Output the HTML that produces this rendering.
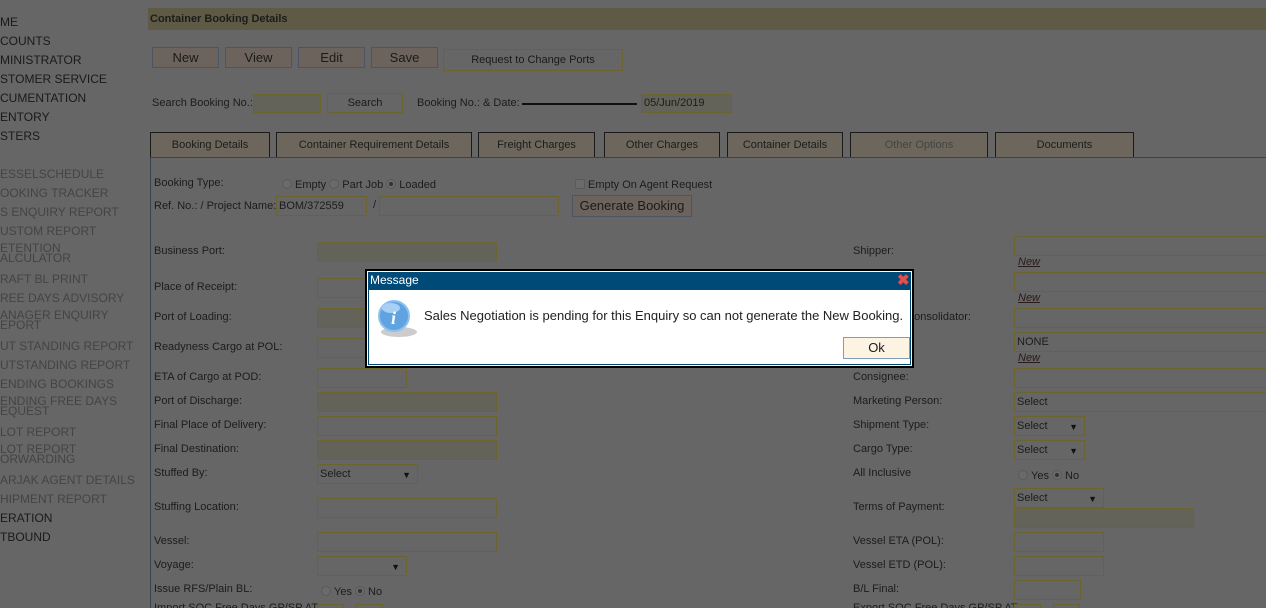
<!DOCTYPE html>
<html><head><meta charset="utf-8"><style>
*{box-sizing:border-box;margin:0;padding:0}
html{width:1266px;height:608px;overflow:hidden}
body{width:1266px;height:608px;overflow:hidden;background:#666;font-family:"Liberation Sans",sans-serif;font-size:11px;color:#1c1c1c;position:relative}
.a{position:absolute;white-space:nowrap}
.nav{font-size:12px;color:#1a1a1a}
.nav.g{color:#444}
.btn{position:absolute;border:1px solid #4c5566;background:#6c645c;text-align:center;font-size:13px;color:#1a1a1a}
.tab{position:absolute;top:132px;height:26px;border:1px solid #1a1a1a;border-bottom:none;background:#6d665c;text-align:center;line-height:25px;font-size:11px}
.in{position:absolute;border:1px solid #6b6430;background:#666;height:20px;font-size:11px;line-height:18px;padding-left:2px}
.dis{background:#64635a}
.lb{position:absolute;font-size:11px;white-space:nowrap}
.sel::after{content:"▼";position:absolute;right:6px;top:1px;font-size:9px;color:#111}
.rad{display:inline-block;width:10px;height:10px;border:1px solid #5a5a5a;border-radius:50%;background:#6a6a6a;vertical-align:-1px;margin-right:3px;position:relative}
.rad.on::after{content:"";position:absolute;left:2px;top:2px;width:4px;height:4px;border-radius:50%;background:#333}
.new{position:absolute;font-style:italic;text-decoration:underline;color:#2a1a1a;font-size:11px}
</style></head><body>
<div class="a nav" style="left:0;top:15px">ME</div>
<div class="a nav" style="left:0;top:34px">COUNTS</div>
<div class="a nav" style="left:0;top:53px">MINISTRATOR</div>
<div class="a nav" style="left:0;top:72px">STOMER SERVICE</div>
<div class="a nav" style="left:0;top:91px">CUMENTATION</div>
<div class="a nav" style="left:0;top:110px">ENTORY</div>
<div class="a nav" style="left:0;top:129px">STERS</div>
<div class="a nav g" style="left:0;top:167px">ESSELSCHEDULE</div>
<div class="a nav g" style="left:0;top:186px">OOKING TRACKER</div>
<div class="a nav g" style="left:0;top:205px">S ENQUIRY REPORT</div>
<div class="a nav g" style="left:0;top:224px">USTOM REPORT</div>
<div class="a nav g" style="left:0;top:243px;line-height:10px">ETENTION<br>ALCULATOR</div>
<div class="a nav g" style="left:0;top:272px">RAFT BL PRINT</div>
<div class="a nav g" style="left:0;top:291px">REE DAYS ADVISORY</div>
<div class="a nav g" style="left:0;top:310px;line-height:10px">ANAGER ENQUIRY<br>EPORT</div>
<div class="a nav g" style="left:0;top:339px">UT STANDING REPORT</div>
<div class="a nav g" style="left:0;top:358px">UTSTANDING REPORT</div>
<div class="a nav g" style="left:0;top:377px">ENDING BOOKINGS</div>
<div class="a nav g" style="left:0;top:396px;line-height:10px">ENDING FREE DAYS<br>EQUEST</div>
<div class="a nav g" style="left:0;top:425px">LOT REPORT</div>
<div class="a nav g" style="left:0;top:444px;line-height:10px">LOT REPORT<br>ORWARDING</div>
<div class="a nav g" style="left:0;top:473px">ARJAK AGENT DETAILS</div>
<div class="a nav g" style="left:0;top:492px">HIPMENT REPORT</div>
<div class="a nav" style="left:0;top:511px">ERATION</div>
<div class="a nav" style="left:0;top:530px">TBOUND</div>

<div class="a" style="left:148px;top:8px;width:1118px;height:22px;background:#5e5a45;font-weight:bold;font-size:11px;line-height:22px;padding-left:2px">Container Booking Details</div>

<div class="btn" style="left:152px;top:47px;width:67px;height:21px;line-height:19px">New</div>
<div class="btn" style="left:225px;top:47px;width:67px;height:21px;line-height:19px">View</div>
<div class="btn" style="left:298px;top:47px;width:67px;height:21px;line-height:19px">Edit</div>
<div class="btn" style="left:371px;top:47px;width:67px;height:21px;line-height:19px">Save</div>
<div class="btn" style="left:443px;top:49px;width:180px;height:22px;line-height:20px;font-size:11px;border-color:#6b6430;background:#666">Request to Change Ports</div>

<div class="lb" style="left:152px;top:97px">Search Booking No.:</div>
<div class="in dis" style="left:253px;top:94px;width:68px;height:19px"></div>
<div class="btn" style="left:327px;top:93px;width:76px;height:20px;line-height:18px;font-size:11px;border-color:#6b6430;background:#666">Search</div>
<div class="lb" style="left:417px;top:97px">Booking No.: &amp; Date:</div>
<div class="a" style="left:522px;top:103px;width:115px;height:2px;background:#111"></div>
<div class="in dis" style="left:641px;top:94px;width:91px;height:19px;line-height:17px">05/Jun/2019</div>

<div class="tab" style="left:150px;width:120px">Booking Details</div>
<div class="tab" style="left:276px;width:196px">Container Requirement Details</div>
<div class="tab" style="left:478px;width:117px">Freight Charges</div>
<div class="tab" style="left:604px;width:116px">Other Charges</div>
<div class="tab" style="left:727px;width:116px">Container Details</div>
<div class="tab" style="left:850px;width:138px;color:#444">Other Options</div>
<div class="tab" style="left:995px;width:139px">Documents</div>
<div class="a" style="left:150px;top:157px;width:1116px;height:1px;background:#3a4150"></div>
<div class="a" style="left:150px;top:157px;width:1px;height:451px;background:#3a4150"></div>

<div class="lb" style="left:154px;top:177px">Booking Type:</div>
<div class="lb" style="left:282px;top:179px"><span class="rad"></span>Empty <span class="rad"></span>Part Job <span class="rad on"></span>Loaded</div>
<div class="lb" style="left:575px;top:179px"><span class="rad" style="border-radius:1px"></span>Empty On Agent Request</div>
<div class="lb" style="left:154px;top:200px">Ref. No.: / Project Name:</div>
<div class="in" style="left:276px;top:196px;width:91px">BOM/372559</div>
<div class="lb" style="left:373px;top:199px">/</div>
<div class="in" style="left:379px;top:196px;width:180px"></div>
<div class="btn" style="left:572px;top:195px;width:120px;height:22px;line-height:20px">Generate Booking</div>

<div class="lb" style="left:154px;top:245px">Business Port:</div><div class="in dis" style="left:317px;top:242px;width:180px"></div>
<div class="lb" style="left:154px;top:281px">Place of Receipt:</div><div class="in" style="left:317px;top:278px;width:180px"></div>
<div class="lb" style="left:154px;top:311px">Port of Loading:</div><div class="in dis" style="left:317px;top:308px;width:180px"></div>
<div class="lb" style="left:154px;top:341px">Readyness Cargo at POL:</div><div class="in" style="left:317px;top:338px;width:90px"></div>
<div class="lb" style="left:154px;top:371px">ETA of Cargo at POD:</div><div class="in" style="left:317px;top:368px;width:90px"></div>
<div class="lb" style="left:154px;top:395px">Port of Discharge:</div><div class="in dis" style="left:317px;top:392px;width:180px"></div>
<div class="lb" style="left:154px;top:419px">Final Place of Delivery:</div><div class="in" style="left:317px;top:416px;width:180px"></div>
<div class="lb" style="left:154px;top:443px">Final Destination:</div><div class="in dis" style="left:317px;top:440px;width:180px"></div>
<div class="lb" style="left:154px;top:467px">Stuffed By:</div><div class="in sel" style="left:317px;top:464px;width:101px">Select</div>
<div class="lb" style="left:154px;top:501px">Stuffing Location:</div><div class="in" style="left:317px;top:498px;width:180px"></div>
<div class="lb" style="left:154px;top:535px">Vessel:</div><div class="in" style="left:317px;top:532px;width:180px"></div>
<div class="lb" style="left:154px;top:559px">Voyage:</div><div class="in sel" style="left:317px;top:556px;width:90px"></div>
<div class="lb" style="left:154px;top:583px">Issue RFS/Plain BL:</div>
<div class="lb" style="left:321px;top:586px"><span class="rad"></span>Yes <span class="rad on"></span>No</div>
<div class="lb" style="left:154px;top:602px">Import SOC Free Days GP/SP AT</div>
<div class="in" style="left:317px;top:604px;width:27px"></div><div class="in" style="left:356px;top:604px;width:27px"></div>

<div class="lb" style="left:853px;top:245px">Shipper:</div><div class="in" style="left:1014px;top:236px;width:260px"></div><div class="new" style="left:1018px;top:256px">New</div>
<div class="in" style="left:1014px;top:272px;width:260px"></div><div class="new" style="left:1018px;top:292px">New</div>
<div class="lb" style="left:853px;top:311px">Forwarder/Consolidator:</div><div class="in" style="left:1014px;top:308px;width:260px"></div>
<div class="lb" style="left:853px;top:341px">Notify:</div><div class="in" style="left:1014px;top:332px;width:260px">NONE</div><div class="new" style="left:1018px;top:352px">New</div>
<div class="lb" style="left:853px;top:371px">Consignee:</div><div class="in" style="left:1014px;top:368px;width:260px"></div>
<div class="lb" style="left:853px;top:395px">Marketing Person:</div><div class="in" style="left:1014px;top:392px;width:260px">Select</div>
<div class="lb" style="left:853px;top:419px">Shipment Type:</div><div class="in sel" style="left:1014px;top:416px;width:71px">Select</div>
<div class="lb" style="left:853px;top:443px">Cargo Type:</div><div class="in sel" style="left:1014px;top:440px;width:71px">Select</div>
<div class="lb" style="left:853px;top:467px">All Inclusive</div>
<div class="lb" style="left:1018px;top:470px"><span class="rad"></span>Yes <span class="rad on"></span>No</div>
<div class="lb" style="left:853px;top:501px">Terms of Payment:</div><div class="in sel" style="left:1014px;top:488px;width:90px">Select</div>
<div class="in dis" style="left:1014px;top:508px;width:180px"></div>
<div class="lb" style="left:853px;top:535px">Vessel ETA (POL):</div><div class="in" style="left:1014px;top:532px;width:90px"></div>
<div class="lb" style="left:853px;top:559px">Vessel ETD (POL):</div><div class="in" style="left:1014px;top:556px;width:90px"></div>
<div class="lb" style="left:853px;top:583px">B/L Final:</div><div class="in" style="left:1014px;top:580px;width:67px"></div>
<div class="lb" style="left:853px;top:602px">Export SOC Free Days GP/SP AT</div>
<div class="in" style="left:1014px;top:604px;width:27px"></div><div class="in" style="left:1053px;top:604px;width:27px"></div>

<div class="a" style="left:365px;top:269px;width:549px;height:99px;background:#fff;border:2px solid #000"></div>
<div class="a" style="left:368px;top:272px;width:543px;height:93px;border:1px solid #004a78"></div>
<div class="a" style="left:368px;top:272px;width:543px;height:18px;background:#004a78;color:#fff;font-size:12px;line-height:17px;padding-left:2px">Message</div>
<div class="a" style="left:897px;top:273px;color:#e05050;font-size:15px;font-weight:bold;line-height:16px">✖</div>
<svg class="a" style="left:375px;top:296px" width="44" height="44" viewBox="0 0 44 44">
<ellipse cx="24" cy="36" rx="18" ry="5" fill="#ccc"/>
<circle cx="19" cy="20" r="15" fill="#5fa3e0" stroke="#8fc0ee" stroke-width="2"/>
<ellipse cx="16" cy="12" rx="9" ry="5" fill="#a8d0f4"/>
<text x="16" y="28" font-family="Liberation Serif,serif" font-style="italic" font-weight="bold" font-size="18" fill="#fff">i</text>
</svg>
<div class="a" style="left:424px;top:308px;font-size:13px;color:#222">Sales Negotiation is pending for this Enquiry so can not generate the New Booking.</div>
<div class="a" style="left:843px;top:337px;width:67px;height:22px;background:#fdf3e3;border:1px solid #7f9db9;text-align:center;font-size:13px;line-height:20px">Ok</div>
</body></html>
